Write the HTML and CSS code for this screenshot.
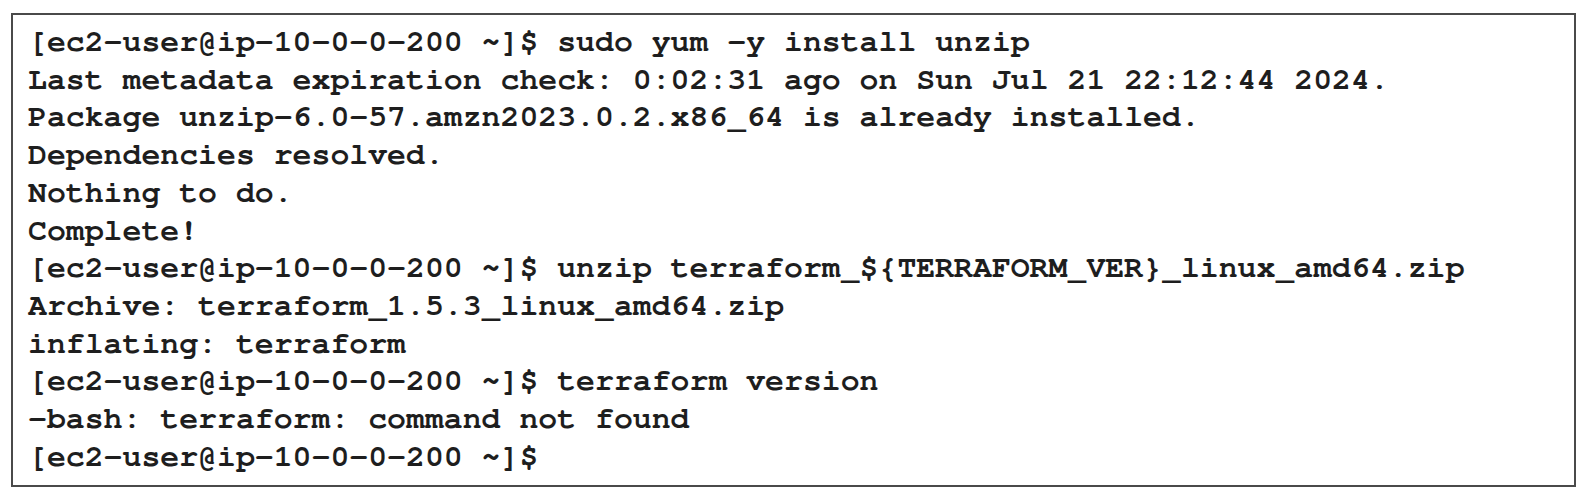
FILE: index.html
```html
<!DOCTYPE html>
<html>
<head>
<meta charset="utf-8">
<link rel="stylesheet" href="styles.css">
</head>
<body>
<div class="page">
<pre class="terminal">[ec2-user@ip-10-0-0-200 ~]$ sudo yum -y install unzip
Last metadata expiration check: 0:02:31 ago on Sun Jul 21 22:12:44 2024.
Package unzip-6.0-57.amzn2023.0.2.x86_64 is already installed.
Dependencies resolved.
Nothing to do.
Complete!
[ec2-user@ip-10-0-0-200 ~]$ unzip terraform_${TERRAFORM_VER}_linux_amd64.zip
Archive: terraform_1.5.3_linux_amd64.zip
inflating: terraform
[ec2-user@ip-10-0-0-200 ~]$ terraform version
-bash: terraform: command not found
[ec2-user@ip-10-0-0-200 ~]$</pre>
</div>
</body>
</html>
```
FILE: styles.css
```css
html, body {
  margin: 0;
  padding: 0;
  background: #ffffff;
}
.page {
  padding: 13px 6px 5px 11px;
}
.terminal {
  margin: 0;
  box-sizing: border-box;
  width: 1565px;
  height: 474px;
  border: 2px solid #4a4a4a;
  padding: 8px 0 0 15px;
  font-family: "Nimbus Mono PS", "Nimbus Mono L", "FreeMono", "Courier 10 Pitch", "Liberation Mono", "Courier New", monospace;
  font-weight: bold;
  font-size: 31.5px;
  line-height: 37.7px;
  color: #1e1e1e;
  background: #ffffff;
  white-space: pre;
  overflow: hidden;
}
```
